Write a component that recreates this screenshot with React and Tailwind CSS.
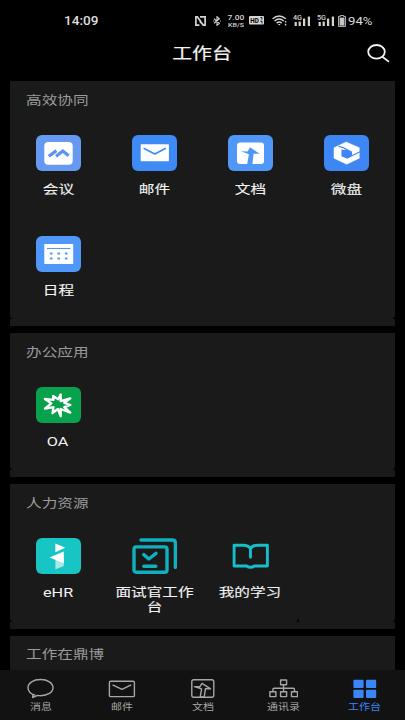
import React from "react";
import clsx from "clsx";

const MeetingIcon = () => (
  <svg viewBox="0 0 45 36" className="w-[45px] h-9">
    <rect width="45" height="36" rx="6" fill="#6699f2" />
    <rect x="8.3" y="7" width="28.4" height="22.7" rx="4" fill="#fff" />
    <path d="M12.8 21.2 20.4 15.6M20 21.2l6.8-5.2 5.8 4.8" fill="none" stroke="#5b93ee" strokeWidth="3.2" />
  </svg>
);

const MailIcon = () => (
  <svg viewBox="0 0 45 36" className="w-[45px] h-9">
    <rect width="45" height="36" rx="6" fill="#3f8bf5" />
    <rect x="8.7" y="9.2" width="28.2" height="17" rx="0.6" fill="#fff" />
    <path d="M11.6 13.2l11.2 5.8 11-5.8" fill="none" stroke="#3f8bf5" strokeWidth="1.6" />
  </svg>
);

const DocIcon = () => (
  <svg viewBox="0 0 45 36" className="w-[45px] h-9">
    <rect width="45" height="36" rx="6" fill="#4f98f9" />
    <rect x="9" y="7.6" width="27" height="21.4" rx="3" fill="#fff" />
    <path d="M12.9 16.2l6.6.2 2.5-4.2 9.6 6.6h-6L24.4 29h-5.2l1.7-9.8z" fill="#4f98f9" />
  </svg>
);

const DriveIcon = () => (
  <svg viewBox="0 0 45 36" className="w-[45px] h-9">
    <rect width="45" height="36" rx="6" fill="#3f86f5" />
    <path d="M22.2 7 35.3 12.8V23.2L22.7 29.2 10 23.2V12.8z" fill="#fff" strokeLinejoin="round" stroke="#fff" strokeWidth="0.5" />
    <path d="M18 15l4.6-.6 5.4 2.8v3.2l-5.2 3-4.8-2z" fill="#3f86f5" />
    <path d="M14.4 11.2l4.6 1.4 9 4.6M36 16.8l-13.2 6.4M18 14.6v7" fill="none" stroke="#3f86f5" strokeWidth="1.1" />
  </svg>
);

const CalendarIcon = () => (
  <svg viewBox="0 0 45 36" className="w-[45px] h-9">
    <rect width="45" height="36" rx="6" fill="#4f98f9" />
    <rect x="8.3" y="8" width="28.9" height="20" rx="0.6" fill="#fff" />
    <path d="M11 12.5h23.4" stroke="#4f98f9" strokeWidth="1.1" />
    <g fill="#4f98f9">
      <rect x="13.9" y="16.5" width="2.6" height="2" rx=".5" />
      <rect x="21.4" y="16.5" width="2.6" height="2" rx=".5" />
      <rect x="28.9" y="16.5" width="2.6" height="2" rx=".5" />
      <rect x="13.9" y="21.4" width="2.6" height="2" rx=".5" />
      <rect x="21.4" y="21.4" width="2.6" height="2" rx=".5" />
      <rect x="28.9" y="21.4" width="2.6" height="2" rx=".5" />
    </g>
  </svg>
);

const OaIcon = () => (
  <svg viewBox="0 0 45 36" className="w-[45px] h-9">
    <rect width="45" height="36" rx="6" fill="#08a14c" />
    <path
      d="M24.7 7.4v6.8l9.6-2.8-6 4.4 6 2.2-6 2.2 6 5.4-9.6-3.6v7.4l-2.8-7.4-5.4 4.2 1-6-8.6 1.4 6.4-5.2-6.4-4.4 8.6.8-.4-3.8 5 3.2z"
      fill="none" stroke="#fff" strokeWidth="2.3" strokeLinejoin="round"
    />
  </svg>
);

const EhrIcon = () => (
  <svg viewBox="0 0 45 36" className="w-[45px] h-9">
    <rect width="45" height="36" rx="6" fill="#16c5c4" />
    <path d="M19.4 5.4l9.8 4.4-9.8 4.4z" fill="#fff" />
    <path d="M19.4 22l8.4-2v8l-8.4 3.4z" fill="#a5e9e8" />
    <path d="M13.6 19.6l14.2-6v11.6z" fill="#fff" />
  </svg>
);

const InterviewIcon = () => (
  <svg viewBox="0 0 45 36" className="w-[45px] h-9" fill="none" stroke="#10b0be" strokeWidth="3.4" strokeLinecap="round" strokeLinejoin="round">
    <path d="M9 2h31.2q3.2 0 3.2 3V29.4" />
    <rect x="2" y="8.9" width="33" height="25.3" rx="2.2" />
    <path d="M11.8 16.6l5 4.4 7.2-5.6M11.8 28.3h12" />
  </svg>
);

const StudyIcon = () => (
  <svg viewBox="0 0 45 36" className="w-[45px] h-9" fill="none" stroke="#12bfca" strokeWidth="2.9" strokeLinecap="round" strokeLinejoin="round">
    <path d="M22.5 19.2V10.6Q20.4 7.2 15.4 7.2H6.1V28h12.6q1.6 1.3 3.8 1.3t3.8-1.3H39.4V7.2h-9.6Q24.6 7.2 22.5 10.6" />
  </svg>
);

const sections = [
  {
    title: "高效协同",
    height: "h-[238px]",
    apps: [
      { label: "会议", icon: MeetingIcon },
      { label: "邮件", icon: MailIcon },
      { label: "文档", icon: DocIcon },
      { label: "微盘", icon: DriveIcon },
      { label: "日程", icon: CalendarIcon },
    ],
  },
  { title: "办公应用", height: "h-[137.3px]", apps: [{ label: "OA", icon: OaIcon, latin: true }] },
  {
    title: "人力资源",
    height: "h-[137.3px]",
    notch: true,
    apps: [
      { label: "eHR", icon: EhrIcon, latin: true },
      { label: "面试官工作台", icon: InterviewIcon },
      { label: "我的学习", icon: StudyIcon },
    ],
  },
  { title: "工作在鼎博", height: "h-[137.3px]", apps: [] },
];

const tabs = [
  {
    label: "消息",
    icon: (
      <path d="M9.2 17.2C4.4 15.8 2 13 2 9.7 2 5 7.4 1.5 14.5 1.5S27 5 27 9.7s-5.4 8-12.5 8c-1 0-2-.1-3-.3L6.6 19.5 7 16.4" />
    ),
  },
  {
    label: "邮件",
    icon: (
      <>
        <rect x="2.4" y="3.2" width="25" height="15.4" rx="1.2" />
        <path d="M5.6 6.8l9.4 4.6 9.2-4.6" />
      </>
    ),
  },
  {
    label: "文档",
    icon: (
      <>
        <rect x="3.8" y="1.8" width="22" height="17.4" rx="2" />
        <path d="M6.4 8.6l5.4.2 2.2-3.4 8.6 5.4h-5.2l-1.2 8.2h-4l1.4-8.2z" />
      </>
    ),
  },
  {
    label: "通讯录",
    icon: (
      <>
        <rect x="11.6" y="2" width="6" height="4.8" />
        <rect x="0.9" y="13.8" width="6" height="4.8" />
        <rect x="11.6" y="13.8" width="6" height="4.8" />
        <rect x="22.5" y="13.8" width="6" height="4.8" />
        <path d="M14.6 6.8v7M3.9 13.8v-2.4q0-1.2 1.2-1.2h19.2q1.2 0 1.2 1.2v2.4" />
      </>
    ),
  },
  {
    label: "工作台",
    active: true,
    icon: (
      <g fill="currentColor" stroke="none">
        <rect x="3.4" y="1.7" width="10.2" height="8.2" rx="1" />
        <rect x="16" y="1.7" width="10.2" height="8.2" rx="1" />
        <rect x="3.4" y="11.7" width="10.2" height="8.2" rx="1" />
        <rect x="16" y="11.7" width="10.2" height="8.2" rx="1" />
      </g>
    ),
  },
];

function Signal({ gen }) {
  return (
    <svg viewBox="0 0 18 12" className="w-[18px] h-3" fill="#d4d4d4">
      <text x="0" y="5.2" fontSize="6.6" fontWeight="500" textLength="9" lengthAdjust="spacingAndGlyphs">{gen}</text>
      <rect x="1.6" y="7" width="2.2" height="4" />
      <rect x="5.6" y="6.6" width="2.2" height="4.4" />
      <rect x="10" y="3.6" width="2.2" height="7.4" />
      <rect x="14.8" y="1.6" width="2.2" height="9.4" />
    </svg>
  );
}

function StatusBar() {
  return (
    <div className="flex items-center h-[41px] pl-16 text-[#dedede]">
      <span className="w-[131px] text-[12px] font-medium leading-none origin-left scale-x-[1.13]">14:09</span>
      <svg viewBox="0 0 11 10" className="w-[11px] h-2.5" fill="none" stroke="#d4d4d4" strokeWidth="1.7">
        <path d="M4.4 9.1H.9V.9h1.5l3.2 4.4v2M5 .9h5.1v8.2H8.2L4.8 4.4" />
      </svg>
      <svg viewBox="0 0 8 10" className="ml-[7px] w-2 h-2.5" fill="none" stroke="#d4d4d4" strokeWidth="1.1">
        <path d="M1 2.8l5.4 4.4L4 9.3V.7l2.4 2.1L1 7.2" />
        <path d="M.2 5h.9M7 5h.9" />
      </svg>
      <svg viewBox="0 0 18 12" className="ml-1.5 w-[18px] h-3 overflow-visible" fill="#d4d4d4" fontWeight="500">
        <text x="0.5" y="5.4" fontSize="7.6" textLength="16.8" lengthAdjust="spacingAndGlyphs">7.00</text>
        <text x="1" y="11.6" fontSize="6" textLength="16" lengthAdjust="spacingAndGlyphs">KB/S</text>
      </svg>
      <svg viewBox="0 0 15 9" className="ml-1 w-[15px] h-[9px]">
        <rect width="15" height="8.6" rx="1" fill="#d4d4d4" />
        <text x="1.3" y="6.8" fontSize="6.8" fontWeight="700" textLength="8.6" lengthAdjust="spacingAndGlyphs">HD</text>
        <path d="M11.4 1.5h1.5v2.2M11.4 5.2h1.6v2.2" fill="none" stroke="#000" strokeWidth=".9" />
      </svg>
      <svg viewBox="0 0 16 11" className="ml-2 w-4 h-[11px]" fill="none" stroke="#d4d4d4" strokeWidth="1.4">
        <path d="M.6 3.8Q7.2-1.8 13.8 3.8M2.6 6Q7.2 2 11.8 6M4.7 8.1Q7.2 6 9.7 8.1" />
        <path d="M5.8 8.9h2.8L7.2 10.6z" fill="#d4d4d4" stroke="none" />
        <path d="M13.6 6v1.6M13.6 8.8v1.6" />
      </svg>
      <div className="flex ml-[5px] gap-1.5">
        <Signal gen="4G" />
        <Signal gen="5G" />
      </div>
      <svg viewBox="0 0 8 12" className="ml-[3px] w-2 h-3">
        <path d="M2.4.4h3.2v1H7.4v10.2H.6V1.4h1.8z" fill="none" stroke="#d4d4d4" strokeWidth=".9" />
        <rect x="1.6" y="2.6" width="4.8" height="8" fill="#c6c6c6" />
      </svg>
      <span className="ml-0.5 mt-px text-[11px] leading-none origin-left scale-x-[1.2]">94%</span>
    </div>
  );
}

function Section({ title, height, apps, notch }) {
  return (
    <section className="shrink-0">
      <div className={clsx("relative rounded-b-[4px] bg-[#1a1a1a]", height)}>
        <h2 className="h-[54px] pt-[9.6px] pl-4 text-[12.5px] leading-5 text-[#9a9a9a]">
          <span className="inline-block origin-left scale-x-[1.25]">{title}</span>
        </h2>
        <div className="grid grid-cols-[repeat(4,96px)] auto-rows-[100.5px]">
          {apps.map((app) => (
            <div key={app.label} className="flex flex-col items-center">
              <app.icon />
              <span
                className={clsx(
                  "mt-3 max-w-[65px] text-center leading-[14.5px] text-[#f2f2f2] scale-x-[1.25]",
                  app.latin ? "text-[13px]" : "ml-px text-[12.5px] [-webkit-text-stroke:0.12px_#f2f2f2]"
                )}
              >
                {app.label}
              </span>
            </div>
          ))}
        </div>
        {notch && (
          <svg viewBox="0 0 4 4" className="absolute right-[96px] bottom-0 w-1 h-1">
            <path d="M4 0v4H0Q3.2 3.2 4 0z" fill="#000" />
          </svg>
        )}
      </div>
      <div className="h-[7px] bg-[#1a1a1a]" />
    </section>
  );
}

export default function App() {
  return (
    <div className="flex flex-col w-[405px] h-[720px] overflow-hidden bg-black font-[Roboto,'Noto_Sans_CJK_SC',sans-serif]">
      <StatusBar />

      {/* Title bar */}
      <header className="grid grid-cols-[1fr_auto_1fr] items-center h-10 pb-[15px]">
        <span />
        <h1 className="text-[16px] leading-6 text-[#f2f2f2] [-webkit-text-stroke:0.2px_#f2f2f2] scale-x-[1.24]">工作台</h1>
        <svg viewBox="0 0 23 19" className="justify-self-end mr-[15px] w-[23px] h-[19px]" fill="none" stroke="#f2f2f2" strokeWidth="1.8" strokeLinecap="round">
          <ellipse cx="9.5" cy="7.8" rx="8.3" ry="6.8" />
          <path d="M15.4 12.8l6 4.6" />
        </svg>
      </header>

      {/* App groups */}
      <main className="flex flex-col flex-1 min-h-0 gap-[7px] px-2.5 overflow-hidden">
        {sections.map((s) => (
          <Section key={s.title} {...s} />
        ))}
      </main>

      {/* Bottom tabs */}
      <nav className="grid grid-cols-5 shrink-0 h-[50.5px] bg-[#121212]">
        {tabs.map((tab) => (
          <button
            key={tab.label}
            className={clsx("flex flex-col items-center pt-2", tab.active ? "text-[#3a86f7]" : "text-[#a6a6a6]")}
          >
            <svg viewBox="0 0 29.4 21" className="w-[29.4px] h-[21px]" fill="none" stroke="currentColor" strokeWidth="1.4" strokeLinejoin="round">
              {tab.icon}
            </svg>
            <span className="mt-px ml-px text-[9px] leading-[14px] scale-x-[1.22]">{tab.label}</span>
          </button>
        ))}
      </nav>
    </div>
  );
}
